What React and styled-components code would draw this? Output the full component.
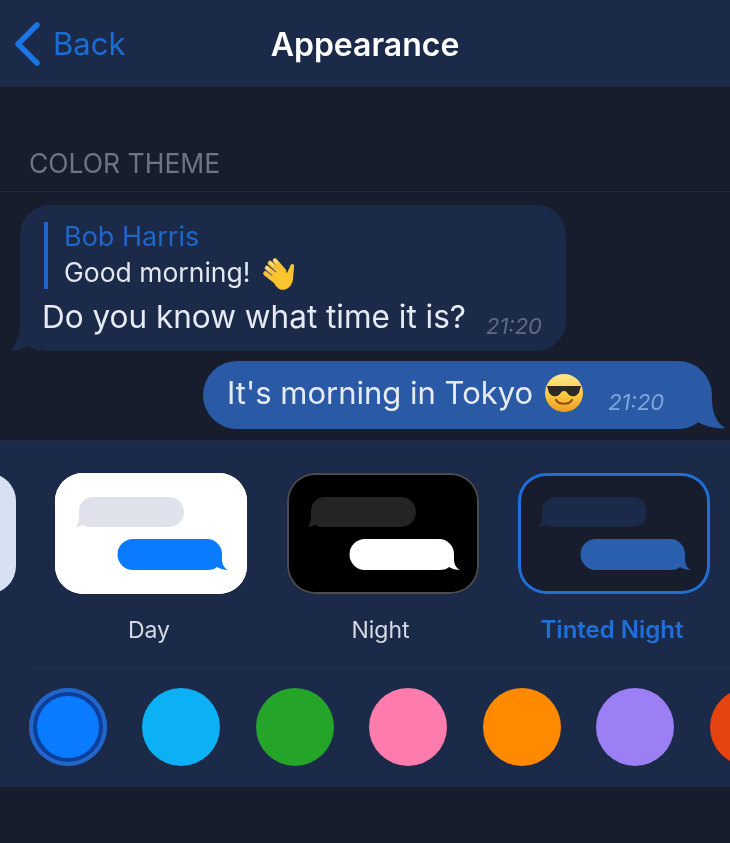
import { createGlobalStyle, styled } from 'styled-components';

const GlobalStyle = createGlobalStyle`
    html, body {
        margin: 0;
        padding: 0;
        background: #181d2e;
    }
    * {
        box-sizing: border-box;
    }
`;

const themes = [
    { name: '', bg: '#d6e2f3', line: 'transparent' },
    { name: 'Day', bg: '#ffffff', line: '#ffffff', incoming: '#dfe2ea', outgoing: '#0a7aff' },
    { name: 'Night', bg: '#000000', line: '#4b4c52', incoming: '#242326', outgoing: '#ffffff' },
    {
        name: 'Tinted Night',
        bg: '#181d2e',
        line: '#1f6fd6',
        incoming: '#1b2a48',
        outgoing: '#2a5fae',
        active: true,
    },
];

const accents = ['#0a7aff', '#0cb1f5', '#24a428', '#fd7bad', '#ff8a00', '#9d7ff5', '#e5430f'];

const WaveEmoji = () => (
    <svg width="36" height="36" viewBox="0 0 36 36" fill="none">
        <path
            d="M8 7 L19 17 M5 12 L16 21 M3.5 17.5 L13 25 M13 4.5 L22 15"
            stroke="#f6c040"
            strokeWidth="4.6"
            strokeLinecap="round"
        />
        <path
            d="M10 20 L20 11 L25 17 L29 8.5 C31 7 32.5 8.5 32 11 L31 23 C30 31 24 35 18.5 33.5 C14 32 11 26 10 20Z"
            fill="#fbc42f"
        />
        <path d="M8 6.5 L11 9 M12.5 4 L15 6.5 M4.5 11.5 L7 13.5" stroke="#f9dd98" strokeWidth="2" strokeLinecap="round" />
    </svg>
);

const CoolEmoji = () => (
    <svg width="40" height="40" viewBox="0 0 40 40">
        <defs>
            <linearGradient id="face" x1="0" y1="0" x2="0" y2="1">
                <stop offset="0" stopColor="#fde98c" />
                <stop offset="0.55" stopColor="#fbc93f" />
                <stop offset="1" stopColor="#ef9a24" />
            </linearGradient>
        </defs>
        <circle cx="20" cy="20" r="19" fill="url(#face)" />
        <path
            d="M3 13 H37 L36 16 C35 23 29 25 25 22 C23 20 22.5 18 20 18 C17.5 18 17 20 15 22 C11 25 5 23 4 16Z"
            fill="#2d2a26"
        />
        <path d="M12 27 C15 32 25 32 28 27" fill="none" stroke="#8a4a12" strokeWidth="2.2" strokeLinecap="round" />
    </svg>
);

// 두 개의 말풍선 미리보기
const PreviewBubbles = ({ incoming, outgoing }) => (
    <svg width="192" height="121" viewBox="0 0 192 121">
        <path
            d="M38 24 H114 A15 15 0 0 1 114 54 H35 C32 54 30 53 28 51.5 C26 53 24 54 21 54 C24 50 24 46 24 42 V38 A14 14 0 0 1 38 24Z"
            fill={incoming}
        />
        <path
            d="M78 66 H152 A15 15 0 0 1 167 81 V86 C167 91 169 95 173 97 C169 97 165 96 162 94 C160 96 157 97 152 97 H78 A15.5 15.5 0 0 1 78 66Z"
            fill={outgoing}
        />
    </svg>
);

const App = () => {
    return (
        <Page>
            <GlobalStyle />
            <Header>
                <BackLink>
                    <svg width="26" height="44" viewBox="0 0 26 44" fill="none">
                        <path d="M23 3 L4 22 L23 41" stroke="#1a76e4" strokeWidth="5.5" strokeLinecap="round" strokeLinejoin="round" />
                    </svg>
                    <BackText>Back</BackText>
                </BackLink>
                <Title>Appearance</Title>
            </Header>

            <SectionLabel>COLOR THEME</SectionLabel>

            <Chat>
                <IncomingBubble>
                    <Tail $side="left" width="30" height="30" viewBox="0 0 30 30">
                        <path d="M10 0 C10 12 7 24 0 29 C6 30 14 28 17 25 L30 30 V0Z" fill="#1b2a48" />
                    </Tail>
                    <Reply>
                        <ReplyName>Bob Harris</ReplyName>
                        <ReplyText>
                            Good morning!
                            <EmojiSlot $left="0" $top="3px">
                                <WaveEmoji />
                            </EmojiSlot>
                        </ReplyText>
                    </Reply>
                    <MessageRow>
                        <MessageText $size="31.5px">Do you know what time it is?</MessageText>
                        <Time $out={false}>21:20</Time>
                    </MessageRow>
                </IncomingBubble>
                <OutgoingBubble>
                    <Tail $side="right" width="33" height="30" viewBox="0 0 33 30">
                        <path d="M20 0 C20 12 24 24 33 29 C26 30 14 28 6 23 L0 20 V0Z" fill="#2a5aa6" />
                    </Tail>
                    <MessageText $size="31px">It's morning in Tokyo</MessageText>
                    <EmojiSlot $left="11px" $top="0">
                        <CoolEmoji />
                    </EmojiSlot>
                    <Time $out>21:20</Time>
                </OutgoingBubble>
            </Chat>

            <Panel>
                <ThemeRow>
                    {themes.map((theme) => (
                        <ThemeItem key={theme.bg}>
                            <ThemeCard $bg={theme.bg} $line={theme.line} $active={theme.active}>
                                {theme.incoming && (
                                    <PreviewBubbles incoming={theme.incoming} outgoing={theme.outgoing} />
                                )}
                            </ThemeCard>
                            <ThemeName $active={theme.active}>{theme.name}</ThemeName>
                        </ThemeItem>
                    ))}
                </ThemeRow>
                <Divider />
                <AccentRow>
                    {accents.map((color, index) => (
                        <Accent key={color} $color={color} $active={index === 0} />
                    ))}
                </AccentRow>
            </Panel>
        </Page>
    );
};

export default App;

const Page = styled.div`
    width: 730px;
    height: 843px;
    overflow: hidden;
    background: #181d2e;
    font-family: Inter, 'Liberation Sans', sans-serif;
    color: #ffffff;
    filter: blur(0.5px);
`;

const Header = styled.header`
    position: relative;
    display: flex;
    align-items: center;
    justify-content: center;
    height: 87px;
    background: #1b2a48;
    border-bottom: 2px solid #1f2a42;
`;

const BackLink = styled.div`
    position: absolute;
    left: 14px;
    top: 22px;
    display: flex;
    align-items: center;
    gap: 13px;
`;

const BackText = styled.span`
    font-size: 31px;
    line-height: 44px;
    color: #1a6dd4;
`;

const Title = styled.h1`
    margin: 0;
    padding-top: 4px;
    font-size: 32px;
    font-weight: 600;
    color: #ffffff;
`;

const SectionLabel = styled.div`
    height: 105px;
    padding: 62px 0 0 29px;
    font-size: 26.5px;
    line-height: 29px;
    color: #6f7485;
    border-bottom: 1px solid #232b40;
`;

const Chat = styled.section`
    display: flex;
    flex-direction: column;
    height: 248px;
    padding-top: 13px;
`;

const IncomingBubble = styled.div`
    position: relative;
    align-self: flex-start;
    width: 546px;
    height: 146px;
    margin-left: 20px;
    padding: 17px 0 0 22px;
    background: #1b2a48;
    border-radius: 30px;
`;

const OutgoingBubble = styled.div`
    position: relative;
    display: flex;
    align-items: center;
    align-self: flex-end;
    width: 509px;
    height: 68px;
    margin: 10px 18px 0 0;
    padding: 0 0 4px 24px;
    background: #2a5aa6;
    border-radius: 34px;
`;

const Tail = styled.svg`
    position: absolute;
    bottom: 0;
    ${(props) => (props.$side === 'left' ? 'left: -10px;' : 'right: -13px;')}
`;

const Reply = styled.div`
    display: flex;
    flex-direction: column;
    gap: 4px;
    padding-left: 16px;
    margin-left: 2px;
    border-left: 4px solid #1f66c8;
`;

const ReplyName = styled.div`
    font-size: 27px;
    line-height: 29px;
    color: #1f66c8;
`;

const ReplyText = styled.div`
    display: flex;
    align-items: center;
    gap: 12px;
    height: 34px;
    font-size: 26.5px;
    color: #e3e7ee;
`;

const MessageRow = styled.div`
    display: flex;
    align-items: center;
    margin-top: 6px;
`;

const MessageText = styled.span`
    font-size: ${(props) => props.$size};
    line-height: 38px;
    color: #e6ebf3;
`;

const EmojiSlot = styled.span`
    display: flex;
    margin-left: ${(props) => props.$left};
    margin-top: ${(props) => props.$top};
`;

const Time = styled.span`
    margin-left: ${(props) => (props.$out ? '24px' : '20px')};
    margin-top: 18px;
    font-size: 22px;
    font-style: italic;
    color: ${(props) => (props.$out ? '#7fa6dc' : '#5f6b85')};
`;

const Panel = styled.section`
    height: 347px;
    overflow: hidden;
    background: #1b2a48;
    border-top: 1px solid #222d47;
`;

const ThemeRow = styled.div`
    display: flex;
    gap: 39.5px;
    margin: 32px 0 0 -176.5px;
`;

const ThemeItem = styled.div`
    display: flex;
    flex-direction: column;
    align-items: center;
    flex: 0 0 192px;
`;

const ThemeCard = styled.div`
    width: 192px;
    height: 121px;
    overflow: hidden;
    background: ${(props) => props.$bg};
    border-radius: 28px;
    box-shadow: inset 0 0 0 ${(props) => (props.$active ? '3px' : '2px')} ${(props) => props.$line};
`;

const ThemeName = styled.div`
    margin-top: 22px;
    padding-right: 4px;
    font-size: ${(props) => (props.$active ? '24px' : '23px')};
    line-height: 28px;
    font-weight: ${(props) => (props.$active ? 600 : 400)};
    color: ${(props) => (props.$active ? '#1f6fd6' : '#d5dae5')};
`;

const Divider = styled.div`
    height: 2px;
    margin: 23px 0 0 32px;
    background: #222f4d;
`;

const AccentRow = styled.div`
    display: flex;
    gap: 35.5px;
    margin-top: 19px;
    padding-left: 28.5px;
`;

const Accent = styled.div`
    flex: 0 0 78px;
    height: 78px;
    border-radius: 50%;
    background: ${(props) => props.$color};
    ${(props) =>
        props.$active &&
        `
        box-shadow: inset 0 0 0 4px #2366c8, inset 0 0 0 8px #0b3f9c;
    `}
`;
